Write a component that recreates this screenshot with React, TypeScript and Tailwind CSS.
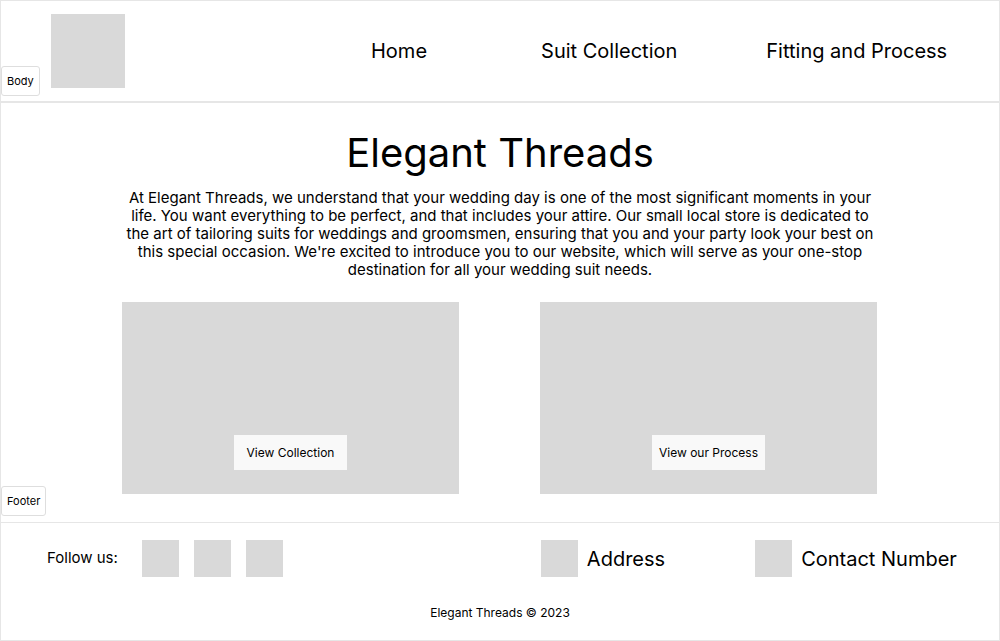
const box = "bg-[#d9d9d9]"

const Tag = ({ label, className }: { label: string; className: string }) => (
  <div
    className={`absolute left-0 flex items-center rounded-[3px] border border-[#dedede] bg-white px-[5px] text-[11px] text-black ${className}`}
  >
    {label}
  </div>
)

const Card = ({ label }: { label: string }) => (
  <div className={`flex h-[192px] w-[337px] flex-col items-center justify-end pb-[24px] ${box}`}>
    <button className="h-[35px] w-[113px] bg-[#f9f9f9] text-[12px] text-black">
      {label}
    </button>
  </div>
)

export default function App() {
  return (
    <div
      className="relative h-[641px] w-[1000px] overflow-hidden border border-[#e6e6e6] bg-white text-black"
      style={{ fontFamily: "Inter, 'Noto Sans', sans-serif" }}
    >
      <header className="flex h-[102px] items-start border-b-2 border-[#e6e6e6]">
        <div className={`ml-[50px] mt-[13px] h-[74px] w-[74px] ${box}`} />
        <nav className="ml-[246px] flex h-[100px] items-center text-[20px]">
          <a>Home</a>
          <a className="ml-[114px]">Suit Collection</a>
          <a className="ml-[89px]">Fitting and Process</a>
        </nav>
      </header>

      <main className="flex h-[419px] flex-col items-center">
        <h1 className="mt-[26px] text-[40px] leading-[48px]">Elegant Threads</h1>
        <p className="mt-[12px] w-[760px] text-center text-[15px] leading-[18px]">
          At Elegant Threads, we understand that your wedding day is one of the most
          significant moments in your life. You want everything to be perfect, and that
          includes your attire. Our small local store is dedicated to the art of tailoring
          suits for weddings and groomsmen, ensuring that you and your party look your best
          on this special occasion. We're excited to introduce you to our website, which
          will serve as your one-stop destination for all your wedding suit needs.
        </p>
        <div className="mr-[1px] mt-[23px] flex gap-[81px]">
          <Card label="View Collection" />
          <Card label="View our Process" />
        </div>
      </main>

      <footer className="h-[118px] border-t border-[#e6e6e6]">
        <div className="mt-[17px] flex h-[37px] items-center">
          <span className="ml-[46px] text-[15px]">Follow us:</span>
          <div className="ml-[24px] flex gap-[15px]">
            <div className={`h-[37px] w-[37px] ${box}`} />
            <div className={`h-[37px] w-[37px] ${box}`} />
            <div className={`h-[37px] w-[37px] ${box}`} />
          </div>
          <div className={`ml-[258px] h-[37px] w-[37px] ${box}`} />
          <span className="ml-[9px] text-[20px]">Address</span>
          <div className={`ml-[90px] h-[37px] w-[37px] ${box}`} />
          <span className="ml-[9px] text-[20px]">Contact Number</span>
        </div>
        <p className="mt-[27px] text-center text-[12px]">Elegant Threads © 2023</p>
      </footer>

      <Tag label="Body" className="top-[65px] h-[30px]" />
      <Tag label="Footer" className="top-[485px] h-[30px]" />
    </div>
  )
}
